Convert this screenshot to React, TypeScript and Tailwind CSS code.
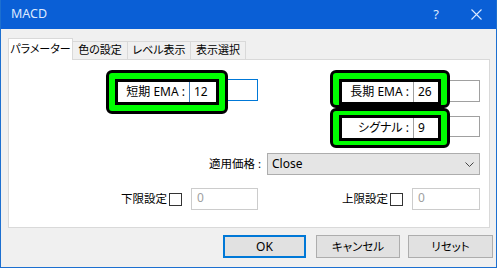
import React from "react";

const font = "font-['Noto_Sans','Noto_Sans_CJK_JP',sans-serif] [font-feature-settings:'palt'] whitespace-nowrap";

function Highlight({
  label,
  value,
  pad,
  labelW,
  valueW,
  focused,
}: {
  label: string;
  value: string;
  pad: string;
  labelW: string;
  valueW: string;
  focused?: boolean;
}) {
  return (
    <div className={`rounded-[6px] border-[3px] border-black bg-[#00ff00] ${pad}`}>
      <div className="flex h-[20px] border-[3px] border-black bg-white box-content">
        <div className={`${labelW} flex items-center justify-end pr-[4px] text-[12px] text-black`}>
          {label}
        </div>
        <div
          className={`${valueW} flex items-center border-l ${
            focused ? "border-[#3d7fc1]" : "border-[#a0a0a0]"
          } pl-[4px] text-[12px] text-black`}
        >
          {value}
        </div>
      </div>
    </div>
  );
}

function Tail({ cls, focused }: { cls: string; focused?: boolean }) {
  return (
    <div
      className={`${cls} w-[30px] border-y border-r bg-white ${
        focused ? "border-[#0078d7]" : "border-[#a0a0a0]"
      }`}
    />
  );
}

function Limit({ label, inputW }: { label: string; inputW: string }) {
  return (
    <div className="flex items-center">
      <span className="text-[11.5px] text-black">{label}</span>
      <span className="ml-[2px] h-[13px] w-[13px] border border-[#333333] bg-white" />
      <div
        className={`ml-[9px] h-[22px] ${inputW} border border-[#cccccc] bg-white pl-[5px] pt-[1px] text-[12px] leading-[16px] text-[#a0a0a0]`}
      >
        0
      </div>
    </div>
  );
}

export default function App() {
  return (
    <div className={`h-[270px] w-[500px] bg-white ${font}`}>
      <div className="flex h-[268px] w-[497px] flex-col border-x border-b border-[#1c6fd0] bg-[#f0f0f0]">
        {/* title bar */}
        <div className="flex h-[29px] shrink-0 items-center bg-[#0a5fd6] pl-[10px] text-[12.5px] text-[#dce9ff]">
          <span>MACD</span>
          <span className="ml-auto mr-[32px] text-[13px]">?</span>
          <svg width="11" height="11" viewBox="0 0 11 11" className="mr-[14px]">
            <path d="M0.5 0.5 L10.5 10.5 M10.5 0.5 L0.5 10.5" stroke="#dce9ff" strokeWidth="1.1" />
          </svg>
        </div>

        <div className="flex flex-col pl-[7px] pt-[9px]">
          {/* tabs */}
          <div className="flex h-[21px] items-end text-[11px] text-black">
            <div className="relative z-10 -mb-px flex h-[22px] w-[65px] items-center justify-center border-x border-t border-[#d9d9d9] bg-white">
              パラメーター
            </div>
            <div className="flex h-[18px] w-[55px] items-center justify-center border-t border-r border-[#d9d9d9]">
              色の設定
            </div>
            <div className="flex h-[18px] w-[63px] items-center justify-center border-t border-r border-[#d9d9d9]">
              レベル表示
            </div>
            <div className="flex h-[18px] w-[55px] items-center justify-center border-t border-r border-[#d9d9d9]">
              表示選択
            </div>
          </div>

          {/* panel */}
          <div className="h-[169px] w-[482px] border border-[#d9d9d9] bg-white pt-[10px]">
            <div className="flex items-start">
              <div className="flex w-[249px] items-start justify-end">
                <Highlight label="短期 EMA :" value="12" pad="p-[6px]" labelW="w-[71px]" valueW="w-[27px]" focused />
                <Tail cls="mt-[9px] h-[22px] w-[29px]" focused />
              </div>
              <div className="flex w-[222px] flex-col items-end">
                <div className="flex items-start">
                  <Highlight label="長期 EMA :" value="26" pad="px-[6px] pt-[6px] pb-0" labelW="w-[71px]" valueW="w-[25px]" />
                  <Tail cls="mt-[10px] h-[22px]" />
                </div>
                <div className="flex items-start">
                  <Highlight label="シグナル :" value="9" pad="px-[6px] py-[4px]" labelW="w-[71px]" valueW="w-[25px]" />
                  <Tail cls="mt-[8px] h-[21px]" />
                </div>
              </div>
            </div>

            <div className="mt-[5px] flex w-[471px] items-center justify-end">
              <span className="mr-[6px] text-[11.5px] text-black">適用価格 :</span>
              <div className="flex h-[22px] w-[213px] items-center border border-[#adadad] bg-[#e5e5e5] pl-[4px] pr-[5px] text-[12px] text-black">
                <span>Close</span>
                <svg width="9" height="5" viewBox="0 0 9 5" className="ml-auto">
                  <path d="M0.5 0.5 L4.5 4.5 L8.5 0.5" fill="none" stroke="#444" strokeWidth="1" />
                </svg>
              </div>
            </div>

            <div className="mt-[13px] flex items-center">
              <div className="flex w-[249px] justify-end">
                <Limit label="下限設定" inputW="w-[67px]" />
              </div>
              <div className="flex w-[222px] justify-end">
                <Limit label="上限設定" inputW="w-[68px]" />
              </div>
            </div>
          </div>

          {/* buttons */}
          <div className="mt-[7px] flex justify-end pr-[3px] text-[11.5px] text-black">
            <button className="flex h-[23px] w-[83px] items-center justify-center border-2 border-[#0078d7] bg-[#e1e1e1] text-[12px]">
              OK
            </button>
            <button className="ml-[10px] flex h-[23px] w-[84px] items-center justify-center border border-[#adadad] bg-[#e1e1e1]">
              キャンセル
            </button>
            <button className="ml-[8px] flex h-[23px] w-[85px] items-center justify-center border border-[#adadad] bg-[#e1e1e1]">
              リセット
            </button>
          </div>
        </div>
      </div>
    </div>
  );
}
